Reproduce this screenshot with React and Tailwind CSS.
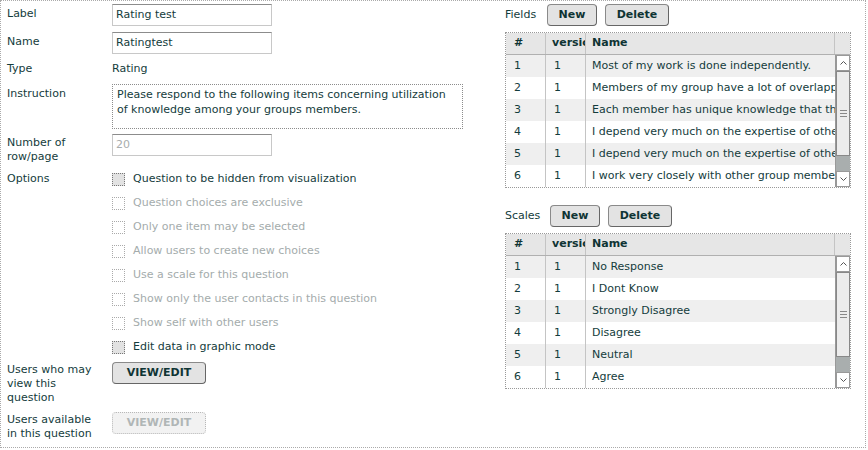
import React from 'react';

const ink = 'text-[#143c3c]';

function TextInput({ value, disabled }) {
  return (
    <div
      className={`w-[160px] h-[22px] border border-[#c8c8c8] border-t-[#8c8c8c] bg-white pl-[3px] flex items-center ${
        disabled ? 'text-[#a8adad]' : ink
      }`}
    >
      {value}
    </div>
  );
}

function Checkbox({ checked }) {
  return (
    <div
      className={`w-[13px] h-[13px] border border-dotted ${
        checked ? 'border-[#777] bg-[#e2e2e2]' : 'border-[#aaa] bg-white'
      }`}
    />
  );
}

function Btn({ children, w, disabled }) {
  return (
    <div
      className={`h-[22px] ${w} rounded-[4px] border flex items-center justify-center font-bold ${
        disabled
          ? 'border-dotted border-[#b8b8b8] bg-[#f2f2f2] text-[#b0b6b6]'
          : 'border-[#8a8a8a] border-b-[#666] border-r-[#666] bg-[#e3e3e3] text-[#0f3434]'
      }`}
    >
      {children}
    </div>
  );
}

function Row({ label, children, className = '' }) {
  return (
    <div className={`flex ${className}`}>
      <div className={`w-[105px] shrink-0 leading-[14px] ${ink}`}>{label}</div>
      <div className="flex-1">{children}</div>
    </div>
  );
}

const options = [
  ['Question to be hidden from visualization', true],
  ['Question choices are exclusive', false],
  ['Only one item may be selected', false],
  ['Allow users to create new choices', false],
  ['Use a scale for this question', false],
  ['Show only the user contacts in this question', false],
  ['Show self with other users', false],
  ['Edit data in graphic mode', true],
];

function Arrow({ up }) {
  return (
    <div className="h-[16px] border border-[#999] bg-white flex items-center justify-center">
      <svg width="7" height="4" viewBox="0 0 7 4">
        <path d={up ? 'M0.5 3.5 L3.5 0.5 L6.5 3.5' : 'M0.5 0.5 L3.5 3.5 L6.5 0.5'} fill="none" stroke="#555" strokeWidth="1" />
      </svg>
    </div>
  );
}

function Scrollbar() {
  return (
    <div className="w-[15px] h-[132px] border-l border-[#999] flex flex-col bg-[#f4f4f4]">
      <Arrow up />
      <div className="h-[85px] border border-[#888] bg-[#ececec] flex flex-col items-center justify-center gap-[2px]">
        <div className="w-[7px] h-px bg-[#888]" />
        <div className="w-[7px] h-px bg-[#888]" />
        <div className="w-[7px] h-px bg-[#888]" />
      </div>
      <div className="flex-1 bg-[#a9aeae]" />
      <Arrow />
    </div>
  );
}

function Grid({ rows }) {
  return (
    <div className="w-[346px] border border-dotted border-[#999] bg-white">
      <div className="flex h-[22px] bg-[#e6e6e6] border-b border-[#b0b0b0] font-bold text-[#0f3434]">
        <div className="w-[40px] pl-[8px] flex items-center border-r border-[#c4c4c4]">#</div>
        <div className="w-[40px] pl-[6px] flex items-center border-r border-[#c4c4c4] overflow-hidden whitespace-nowrap">
          versic
        </div>
        <div className="w-[249px] pl-[6px] flex items-center border-r border-[#c4c4c4]">Name</div>
        <div className="flex-1" />
      </div>
      <div className="flex">
        <div className="w-[329px]">
          {rows.map((r, i) => (
            <div
              key={i}
              className={`flex h-[22px] ${ink} ${i % 2 === 0 ? 'bg-[#efefef]' : 'bg-white'}`}
            >
              <div className="w-[40px] pl-[8px] flex items-center border-r border-[#c4c4c4]">{i + 1}</div>
              <div className="w-[40px] pl-[8px] flex items-center border-r border-[#c4c4c4]">1</div>
              <div className="w-[249px] pl-[6px] flex items-center overflow-hidden whitespace-nowrap">{r}</div>
            </div>
          ))}
        </div>
        <Scrollbar />
      </div>
    </div>
  );
}

const fields = [
  'Most of my work is done independently.',
  'Members of my group have a lot of overlapping knowledge',
  'Each member has unique knowledge that the others need',
  'I depend very much on the expertise of others',
  'I depend very much on the expertise of others in my group',
  'I work very closely with other group members',
];

const scales = ['No Response', 'I Dont Know', 'Strongly Disagree', 'Disagree', 'Neutral', 'Agree'];

export default function App() {
  return (
    <div className="w-[868px] h-[450px] bg-white font-['DejaVu_Sans',Verdana,sans-serif] text-[11px]">
      <div className="w-[866px] h-[448px] border border-dotted border-[#aaa] flex">
        {/* Question form */}
        <div className="w-[498px] pl-[6px] pt-[3px]">
          <Row label={<div className="pt-[3px]">Label</div>}>
            <TextInput value="Rating test" />
          </Row>
          <Row label={<div className="pt-[3px]">Name</div>} className="mt-[6px]">
            <TextInput value="Ratingtest" />
          </Row>
          <Row label={<div className="pt-[4px]">Type</div>} className="mt-[4px] h-[22px]">
            <div className={`pt-[4px] leading-[14px] ${ink}`}>Rating</div>
          </Row>
          <Row label={<div className="pt-[3px]">Instruction</div>} className="mt-[4px]">
            <div className={`w-[351px] h-[45px] border border-dotted border-[#8c8c8c] px-[4px] pt-[2px] leading-[15px] ${ink}`}>
              Please respond to the following items concerning utilization of knowledge among your groups members.
            </div>
          </Row>
          <Row label={<div className="pt-[2px]">Number of<br />row/page</div>} className="mt-[5px]">
            <TextInput value="20" disabled />
          </Row>
          <Row label={<div className="pt-[5px]">Options</div>} className="mt-[3px]">
            <div className="flex flex-col">
              {options.map(([t, on]) => (
                <div key={t} className="h-[24px] flex items-center">
                  <Checkbox checked={on} />
                  <span className={`ml-[8px] ${on ? ink : 'text-[#a4acac]'}`}>{t}</span>
                </div>
              ))}
            </div>
          </Row>
          <Row label={<div className="pt-[1px]">Users who may<br />view this<br />question</div>} className="mt-[3px]">
            <Btn w="w-[94px]">VIEW/EDIT</Btn>
          </Row>
          <Row label={<div className="pt-[1px]">Users available<br />in this question</div>} className="mt-[7px]">
            <Btn w="w-[94px]" disabled>VIEW/EDIT</Btn>
          </Row>
        </div>

        {/* Fields and scales */}
        <div className="flex-1 pl-[6px] pt-[3px]">
          <div className="flex items-start">
            <div className={`w-[42px] pt-[3px] ${ink}`}>Fields</div>
            <Btn w="w-[50px]">New</Btn>
            <div className="w-[8px]" />
            <Btn w="w-[64px]">Delete</Btn>
          </div>
          <div className="mt-[6px]">
            <Grid rows={fields} />
          </div>
          <div className="flex items-start mt-[17px]">
            <div className={`w-[45px] pt-[3px] ${ink}`}>Scales</div>
            <Btn w="w-[50px]">New</Btn>
            <div className="w-[8px]" />
            <Btn w="w-[64px]">Delete</Btn>
          </div>
          <div className="mt-[6px]">
            <Grid rows={scales} />
          </div>
        </div>
      </div>
    </div>
  );
}
